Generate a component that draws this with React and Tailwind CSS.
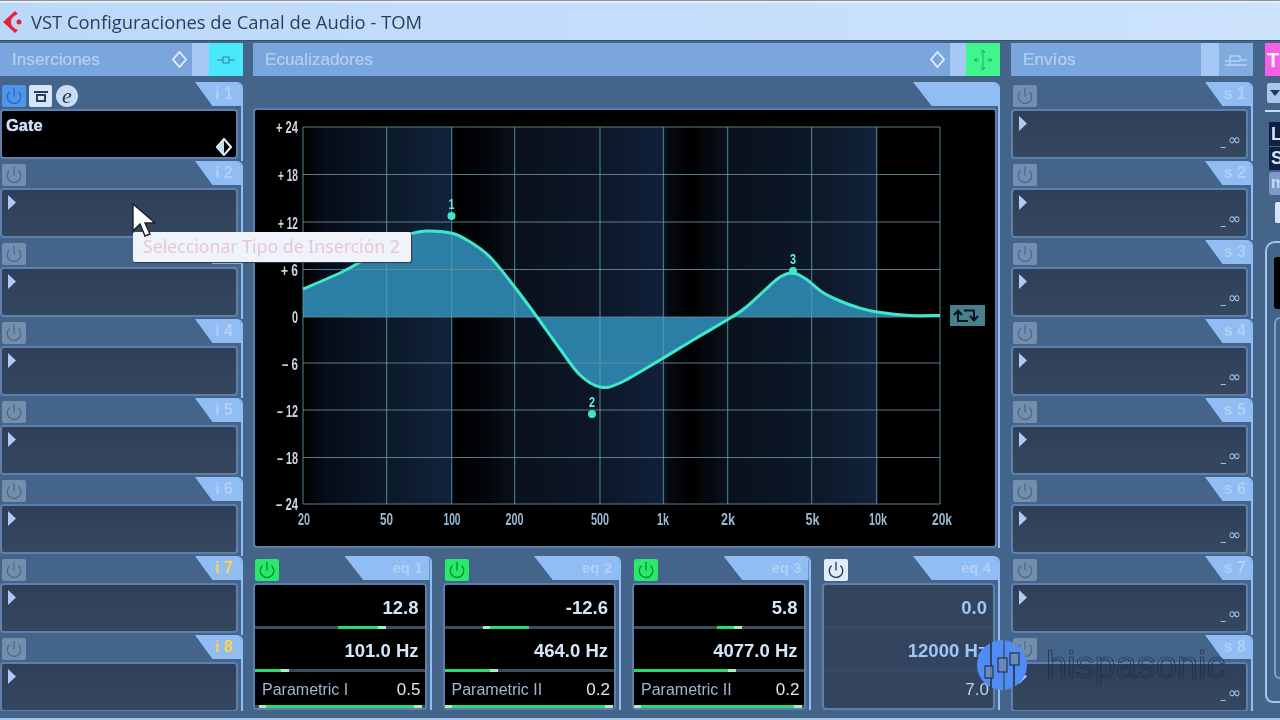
import React from "react";
import { Power } from "lucide-react";

const sans = "font-['Liberation_Sans',Arial,sans-serif]";

function smooth(p) {
  let d = `M${p[0][0]} ${p[0][1]}`;
  for (let i = 0; i < p.length - 1; i++) {
    const a = p[Math.max(i - 1, 0)], b = p[i], c = p[i + 1], e = p[Math.min(i + 2, p.length - 1)];
    d += ` C${b[0] + (c[0] - a[0]) / 6} ${b[1] + (c[1] - a[1]) / 6} ${c[0] - (e[0] - b[0]) / 6} ${c[1] - (e[1] - b[1]) / 6} ${c[0]} ${c[1]}`;
  }
  return d;
}

const curve = [[303,289],[340,273],[360,262],[395,240],[410,234],[426,231],[451,233],[467,240],[490,257],[517,290],[537,317],[560,349],[580,375],[600,387],[620,383],[660,360],[693,340],[727,320],[745,308],[765,290],[780,277],[793,273],[806,279],[822,292],[840,301],[858,307.5],[877,312],[910,315.5],[940,315.5]];
const hLines = [127,174.5,222,269.5,317,363,410,457.5,504];
const vLines = [303,386.7,451.7,514.7,600,663.3,727.7,811.7,876.7,940];
const yLabels = [["+ 24",127,22],["+ 18",175,20],["+ 12",223,20],["+ 6",270,17],["0",317,6],["– 6",364,16],["– 12",411,21],["– 18",458,21],["– 24",504,22]];
const xLabels = [["20",304,12],["50",386.5,13],["100",452,17],["200",514.5,18],["500",600,18],["1k",663,12],["2k",728,14],["5k",812.5,14],["10k",878,18],["20k",942,20]];
const nodes = [[451.5,216,"1"],[592,414,"2"],[793,271,"3"]];

function Graph() {
  const d = smooth(curve);
  return (
    <svg viewBox="255 110 740 436" className="block h-full w-full" fontFamily="'Liberation Sans', Arial, sans-serif">
      <defs>
        <linearGradient id="bands" gradientUnits="userSpaceOnUse" x1="303" x2="940" y1="0" y2="0">
          {[[303,"#000"],[325,"#060c18"],[386,"#0c1828"],[450,"#11223a"],[453,"#000"],[485,"#02050a"],[515,"#0a111d"],[600,"#0c1727"],[662,"#11203a"],[668,"#060a12"],[690,"#000"],[727,"#09111c"],[811,"#0c1727"],[876,"#13223a"],[878,"#000"],[940,"#000"]].map(([x,c]) => (
            <stop key={x} offset={(x - 303) / 637} stopColor={c} />
          ))}
        </linearGradient>
      </defs>
      <rect x="303" y="127" width="637" height="377" fill="url(#bands)" />
      <path d={`${d} L940 317 L303 317 Z`} fill="#2b7fa4" />
      {hLines.map((y) => <line key={y} x1="303" x2="940" y1={y} y2={y} stroke="#6b8f98" strokeOpacity="0.85" />)}
      {vLines.map((x) => <line key={x} x1={x} x2={x} y1="127" y2="504" stroke="#5f9db2" strokeOpacity="0.85" />)}
      <path d={d} fill="none" stroke="#3fe8cc" strokeWidth="3" />
      {yLabels.map(([t,y,w]) => (
        <text key={t} x="298" y={y + 6} textAnchor="end" fontSize="16" fontWeight="700" fill="#c9d6e0" textLength={w} lengthAdjust="spacingAndGlyphs">{t}</text>
      ))}
      {xLabels.map(([t,x,w]) => (
        <text key={t} x={x} y="525" textAnchor="middle" fontSize="16" fontWeight="700" fill="#9ab9d2" textLength={w} lengthAdjust="spacingAndGlyphs">{t}</text>
      ))}
      {nodes.map(([x,y,t]) => (
        <g key={t}>
          <circle cx={x} cy={y} r="4" fill="#3ee6cc" />
          <text x={x} y={y - 7} textAnchor="middle" fontSize="15" fontWeight="700" fill="#5cf0d8" textLength="6" lengthAdjust="spacingAndGlyphs">{t}</text>
        </g>
      ))}
      <rect x="950" y="305" width="35" height="21" fill="#4a7f90" />
      <path d="M958 322 V311 M954 315 L958 310.5 L962 315 M958 321 H968 M974 310 V320 M970 316 L974 320.5 L978 316 M974 310.5 H964" fill="none" stroke="#06141c" strokeWidth="1.9" />
    </svg>
  );
}

function PowerBtn({ tone }) {
  const tones = {
    grey: "bg-[#748fad] text-[#4f6b8c]",
    blue: "bg-[#4f95ec] text-[#2a6cc2]",
    green: "bg-[#27e96a] text-[#0b8a3c]",
    white: "bg-[#e0ebfb] text-[#2b3d58]",
  };
  return (
    <div className={`ml-[2px] mt-[3px] flex h-[22px] w-[24px] items-center justify-center rounded-[2px] ${tones[tone]}`}>
      <Power size={18} strokeWidth={1.8} />
    </div>
  );
}

function Tab({ label, yellow, send }) {
  return (
    <div className={`flex h-[24px] w-[46px] items-center justify-end bg-[#90bdf4] text-[16px] font-bold [clip-path:polygon(0_0,100%_0,100%_100%,38%_100%)] ${send ? "pr-[5px]" : "pr-[8px]"} ${yellow ? "text-[#ffd447]" : "text-[#b2cff5]"}`}>
      {label}
    </div>
  );
}

function Diamond({ className, half }) {
  return (
    <svg viewBox="0 0 16 18" className={className}>
      <path d="M8 1 L15 9 L8 17 L1 9 Z" fill="none" stroke="#e2edfb" strokeWidth="2" />
      {half && <path d="M2 9 L8 2 V16 Z" fill="#c7dcf6" />}
    </svg>
  );
}

function Slot({ label, yellow, send, first }) {
  return (
    <div className="h-[79px] overflow-hidden rounded-tr-[6px] border-r-2 border-[#90bdf4]">
      <div className="flex h-[27px] items-start justify-between">
        {first ? (
          <div className="flex items-center">
            <PowerBtn tone="blue" />
            <div className="ml-[3px] mt-[3px] flex h-[22px] w-[23px] flex-col items-center justify-center rounded-[2px] bg-[#d5e4f8]">
              <div className="h-[2px] w-[14px] bg-[#2b3d58]" />
              <div className="mt-[1px] h-[8px] w-[10px] border-2 border-[#2b3d58]" />
            </div>
            <div className="ml-[4px] mt-[3px] flex h-[22px] w-[22px] items-center justify-center rounded-full bg-[#c8dcf6] font-['Liberation_Serif',serif] text-[22px] italic leading-none text-[#26374f]">e</div>
          </div>
        ) : (
          <PowerBtn tone="grey" />
        )}
        <Tab label={label} yellow={yellow} send={send} />
      </div>
      <div className={`relative mr-[3px] h-[50px] rounded-[4px] border-2 border-[#5d80ad] ${first ? "bg-black" : "bg-gradient-to-b from-[#303f59] to-[#35475f]"}`}>
        {first ? (
          <>
            <div className="pl-[4px] pt-[4px] text-[16.5px] font-bold leading-[20px] text-[#cfe1f8] [text-shadow:0_0_1px_#cfe1f8]">Gate</div>
            <Diamond half className="absolute bottom-[1px] right-[4px] h-[18px] w-[16px]" />
          </>
        ) : (
          <>
            <div className="ml-[6px] mt-[5px] h-[15px] w-[8px] bg-[#acccf6] [clip-path:polygon(0_0,100%_50%,0_100%)]" />
            {send && (
              <div className="absolute bottom-[6px] right-[5px] flex items-baseline gap-[2px] font-['DejaVu_Sans',sans-serif] text-[16px] leading-[18px] text-[#9fc4ee]">
                <span className="text-[10px] font-bold">_</span>
                <span>∞</span>
              </div>
            )}
          </>
        )}
      </div>
    </div>
  );
}

function Header({ title, accent, children, gapWidth, mainIcon }) {
  return (
    <div className="flex h-[33px] bg-[#7ba6dd]">
      <div className="flex flex-1 items-center justify-between pl-[12px] pr-[5px] text-[17.2px] text-[#b0cdf1] [text-shadow:0_0_0.5px_#b0cdf1]">
        <span>{title}</span>
        {mainIcon}
      </div>
      <div className={`${gapWidth} bg-[#a5c8f5]`} />
      <div className={`flex w-[34px] items-center justify-center ${accent}`}>{children}</div>
    </div>
  );
}

function Track({ from, to, capStart, capEnd }) {
  return (
    <div className="relative h-[3px] bg-[#3d4d5f]">
      <div className="absolute inset-y-0 flex justify-between bg-[#27dc6b]" style={{ left: from, width: to - from }}>
        <div className={capStart ? "w-[7px] bg-[#a8f0c4]" : "w-0"} />
        <div className={capEnd ? "w-[8px] bg-[#a8f0c4]" : "w-0"} />
      </div>
    </div>
  );
}

function EqCard({ n, on, v1, v2, name, v3, t1, t2, t3 }) {
  const val = `flex items-center justify-end pr-[6px] pt-[4px] text-[18.5px] font-bold ${on ? "text-[#d6e6f8]" : "text-[#9ec8f7]"}`;
  return (
    <div className="h-[154px] flex-1 overflow-hidden rounded-tr-[6px] border-r-2 border-[#90bdf4]">
      <div className="flex h-[27px] items-start justify-between">
        <PowerBtn tone={on ? "green" : "white"} />
        <div className="flex h-[24px] w-[85px] items-center justify-end bg-[#90bdf4] pr-[7px] text-[15px] font-bold text-[#b2cff5] [clip-path:polygon(0_0,100%_0,100%_100%,22%_100%)]">eq {n}</div>
      </div>
      <div className={`mr-[3px] flex h-[127px] flex-col rounded-[4px] border-2 border-[#5d80ad] ${on ? "bg-black" : "bg-[#33445f]"}`}>
        <div className={`h-[41px] ${val}`}>{v1}</div>
        {on ? <Track {...t1} /> : <div className="h-[3px] bg-[#384a66]" />}
        <div className={`h-[40px] ${val}`}>{v2}</div>
        {on ? <Track {...t2} /> : <div className="h-[3px] bg-[#384a66]" />}
        <div className="flex h-[33px] items-center justify-between pl-[7px] pr-[4px] pt-[3px] text-[16px] text-[#9db6d2]">
          <span>{name}</span>
          <span className={`text-[17px] ${on ? "text-[#dbe8f7]" : "text-[#bcd3ee]"}`}>{v3}</span>
        </div>
        {on ? <Track {...t3} /> : <div className="h-[3px]" />}
      </div>
    </div>
  );
}

const inserts = ["i 1","i 2","i 3","i 4","i 5","i 6","i 7","i 8"];
const sends = ["s 1","s 2","s 3","s 4","s 5","s 6","s 7","s 8"];

export default function App() {
  return (
    <div className={`relative h-[720px] w-[1280px] overflow-hidden bg-[#45648a] blur-[0.5px] ${sans}`}>
      {/* title bar */}
      <div className="h-[3px] border-t border-[#8b95a2] bg-[#e8eef2]" />
      <div className="flex h-[38px] items-center border-b border-[#33506f] bg-gradient-to-r from-[#bcd8f9] to-[#cde3fc] pl-[3px]">
        <svg viewBox="0 0 20 24" className="h-[24px] w-[20px]">
          <path d="M12 1 L0 12 L12 23 L15 20 C10 18 8 15 8 12 C8 9 10 6 15 4 Z" fill="#e8203c" />
          <circle cx="16" cy="12" r="2.5" fill="#e8203c" />
        </svg>
        <span className="ml-[8px] font-['Open_Sans',sans-serif] text-[18.4px] text-[#2d3d58]">VST Configuraciones de Canal de Audio - TOM</span>
      </div>

      {/* panels */}
      <div className="flex pt-[2px]">
        <div className="w-[243px]">
          <Header title="Inserciones" accent="bg-[#4ae8fd]" gapWidth="w-[17px]" mainIcon={<Diamond className="h-[17px] w-[15px]" />}>
            <svg viewBox="0 0 20 10" className="h-[10px] w-[20px]"><path d="M1 5 H7 M13 5 H19" stroke="#2a8494" /><rect x="7" y="2" width="6" height="6" fill="none" stroke="#2a8494" /></svg>
          </Header>
          <div className="mt-[6px] h-[629px] overflow-hidden">
            {inserts.map((l, i) => <Slot key={l} label={l} first={i === 0} yellow={i > 5} />)}
          </div>
        </div>

        <div className="ml-[10px] w-[747px]">
          <Header title="Ecualizadores" accent="bg-[#40f58c]" gapWidth="w-[16px]" mainIcon={<Diamond className="h-[17px] w-[15px]" />}>
            <svg viewBox="0 0 20 24" className="h-[24px] w-[20px]"><path d="M10 3 V21 M2 12 H6 M14 12 H18 M8 5 L10 2 L12 5 M8 19 L10 22 L12 19 M4 10 L1 12 L4 14 M16 10 L19 12 L16 14" fill="none" stroke="#2aa868" /></svg>
          </Header>
          <div className="mt-[6px] h-[466px] overflow-hidden rounded-tr-[6px] border-r-2 border-[#90bdf4]">
            <div className="flex h-[26px] justify-end">
              <div className="h-[24px] w-[85px] bg-[#90bdf4] [clip-path:polygon(0_0,100%_0,100%_100%,22%_100%)]" />
            </div>
            <div className="mr-[1px] h-[440px] rounded-[4px] border-2 border-[#5d80ad] bg-black">
              <Graph />
            </div>
          </div>
          <div className="mt-[8px] flex gap-[11px]">
            <EqCard n={1} on v1="12.8" v2="101.0 Hz" name="Parametric I" v3="0.5" t1={{ from: 83, to: 131, capEnd: true }} t2={{ from: 0, to: 34, capEnd: true }} t3={{ from: 4, to: 167, capStart: true, capEnd: true }} />
            <EqCard n={2} on v1="-12.6" v2="464.0 Hz" name="Parametric II" v3="0.2" t1={{ from: 38, to: 84, capStart: true }} t2={{ from: 0, to: 53, capEnd: true }} t3={{ from: 0, to: 168, capStart: true, capEnd: true }} />
            <EqCard n={3} on v1="5.8" v2="4077.0 Hz" name="Parametric II" v3="0.2" t1={{ from: 83, to: 108, capEnd: true }} t2={{ from: 0, to: 102, capEnd: true }} t3={{ from: 0, to: 168, capStart: true, capEnd: true }} />
            <EqCard n={4} v1="0.0" v2="12000 Hz" name="" v3="7.0" />
          </div>
        </div>

        <div className="ml-[11px] w-[242px]">
          <Header title="Envíos" accent="bg-[#80acdf]" gapWidth="w-[18px]">
            <svg viewBox="0 0 24 14" className="h-[14px] w-[24px]"><path d="M1 12 H23 M6 12 V8 H1 M6 8 V3 H16 V8 H6 M16 7 H23" fill="none" stroke="#b7d2f3" strokeWidth="1.4" /></svg>
          </Header>
          <div className="mt-[6px] h-[629px] overflow-hidden">
            {sends.map((l) => <Slot key={l} label={l} send />)}
          </div>
        </div>

        <div className="ml-[12px] w-[15px] overflow-hidden">
          <div className="flex h-[33px] w-[16px] items-center bg-[#f75fe8] pl-[2px] text-[20px] font-bold text-white">T</div>
          <div className="ml-[2px] mt-[7px] flex h-[20px] items-center rounded-l-[2px] bg-[#a9c6ec] pl-[3px]">
            <div className="h-[6px] w-[12px] bg-[#26374f] [clip-path:polygon(0_0,100%_0,50%_100%)]" />
          </div>
          <div className="mt-[7px] h-[2px] bg-[#c7dcf6]" />
          <div className="ml-[4px] mt-[10px] h-[24px] bg-[#0e2142] pl-[2px] text-[18px] font-bold leading-[24px] text-[#d5e4f8]">L</div>
          <div className="ml-[4px] mt-px h-[23px] bg-[#0e2142] pl-[2px] text-[18px] font-bold leading-[23px] text-[#d5e4f8]">S</div>
          <div className="ml-[4px] mt-[2px] h-[23px] rounded-l-[3px] bg-[#7c9bc8] pl-[2px] text-[16px] font-bold leading-[22px] text-[#c6daf5]">m</div>
          <div className="ml-[10px] mt-[7px] h-[21px] rounded-l-[2px] bg-[#d5e4f8]" />
          <div className="mt-[18px] h-[462px] rounded-tl-[10px] rounded-bl-[8px] border-y-2 border-l-2 border-[#a6c6ec] pl-[7px] pt-[14px]">
            <div className="h-[52px] rounded-l-[3px] bg-black" />
            <div className="mt-[8px] h-[362px] rounded-l-[8px] border-y-2 border-l-2 border-[#7f9fcd]" />
          </div>
        </div>
      </div>

      {/* bottom edge */}
      <div className="absolute inset-x-0 bottom-0 h-[2px] bg-[#a6c6ea]" />

      {/* tooltip */}
      <div className="absolute left-[133px] top-[232px] flex h-[30px] w-[278px] items-center rounded-[2px] bg-[#f1f3fb] pb-[2px] pl-[10px] font-['Noto_Sans',sans-serif] text-[17.7px] text-[#e6c9d8] shadow-[1px_1px_1px_#2a3a52]">
        Seleccionar Tipo de Inserción 2
      </div>

      {/* mouse cursor */}
      <svg viewBox="0 0 24 36" className="absolute left-[132px] top-[203px] h-[36px] w-[24px]">
        <path d="M1 1 V28 L8 21 L13 33 L18 31 L13 20 L23 20 Z" fill="#fff" stroke="#1a2230" strokeWidth="1.4" />
      </svg>

      {/* watermark */}
      <svg viewBox="0 0 50 50" className="absolute left-[977px] top-[640px] h-[50px] w-[50px]">
        <defs><clipPath id="wm"><circle cx="25" cy="25" r="25" /></clipPath></defs>
        <g clipPath="url(#wm)" fill="#4f8cf7">
          <rect x="0" y="0" width="13" height="50" />
          <rect x="15" y="0" width="11" height="50" />
          <rect x="28" y="0" width="8" height="50" />
          <rect x="38" y="0" width="12" height="50" />
        </g>
        <g fill="#6f8db5" fillOpacity="0.8" stroke="#24344f" strokeWidth="1.2">
          <rect x="8" y="26" width="8" height="12" />
          <rect x="21" y="18" width="9" height="14" />
          <rect x="33" y="13" width="9" height="12" />
        </g>
      </svg>
      <div className="absolute left-[1046px] top-[643px] text-[38px] leading-[44px] text-transparent [-webkit-text-stroke:0.7px_#1d2b45]">hispasonic</div>
    </div>
  );
}
